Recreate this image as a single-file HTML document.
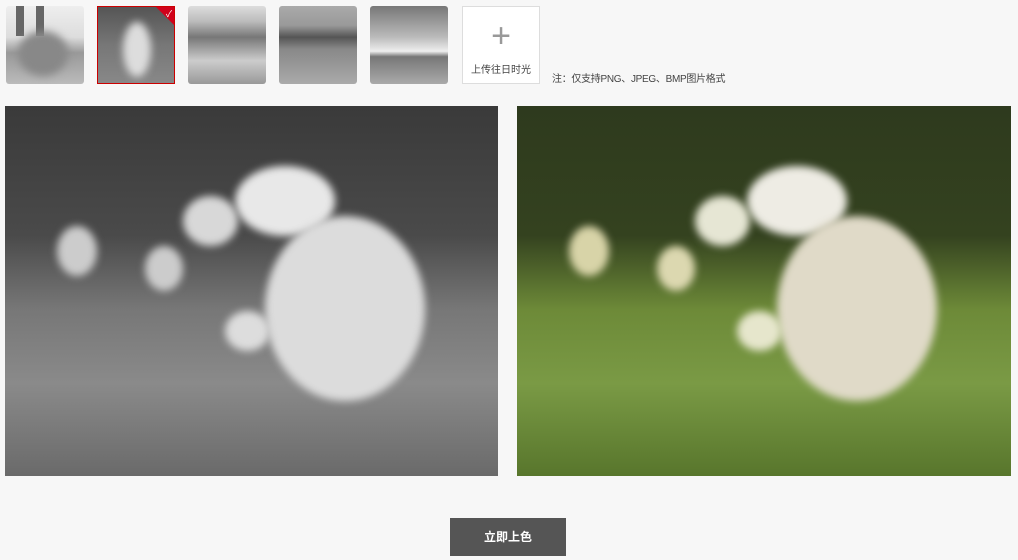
<!DOCTYPE html>
<html><head><meta charset="utf-8"><style>
body{margin:0;width:1018px;height:560px;background:#f7f7f7;position:relative;overflow:hidden;font-family:"Liberation Sans","Noto Sans CJK SC",sans-serif}
.t{position:absolute;top:6px;width:78px;height:78px;border-radius:3px;overflow:hidden}
.img{position:absolute;top:106px;height:370px;overflow:hidden}
.b{position:absolute;border-radius:50%;filter:blur(4px)}
</style></head><body>
<div class="t" style="left:6px;background:linear-gradient(180deg,#eee 0,#ddd 40%,#999 60%,#bbb 100%)">
<div style="position:absolute;left:10px;top:0;width:8px;height:30px;background:#666"></div>
<div style="position:absolute;left:30px;top:0;width:8px;height:30px;background:#666"></div>
<div class="b" style="left:12px;top:25px;width:50px;height:45px;background:#888"></div></div>
<div class="t" style="left:97px;width:76px;height:76px;border:1px solid #c00;border-radius:0;background:linear-gradient(180deg,#555,#777 50%,#888)">
<div class="b" style="left:25px;top:15px;width:28px;height:55px;background:#ddd"></div>
<div style="position:absolute;right:0;top:0;width:0;height:0;border-top:18px solid #d0021b;border-left:18px solid transparent"></div>
<div style="position:absolute;right:2px;top:0;color:#fff;font-size:9px">✓</div></div>
<div class="t" style="left:188px;background:linear-gradient(180deg,#ddd 0,#bbb 20%,#777 40%,#ccc 70%,#999)"></div>
<div class="t" style="left:279px;background:linear-gradient(180deg,#aaa 0,#999 25%,#555 40%,#888 55%,#aaa 100%)"></div>
<div class="t" style="left:370px;background:linear-gradient(180deg,#777 0,#bbb 40%,#eee 58%,#777 65%,#aaa 100%)"></div>
<div style="position:absolute;left:462px;top:6px;width:76px;height:76px;border:1px solid #ddd;background:#fff;text-align:center">
<div style="font-size:34px;color:#999;line-height:34px;margin-top:12px;font-weight:300">+</div>
<div style="font-size:10px;color:#444;margin-top:8px">上传往日时光</div></div>
<div style="position:absolute;left:552px;top:70px;font-size:10px;color:#444;letter-spacing:-0.3px">注：仅支持PNG、JPEG、BMP图片格式</div>
<div class="img" style="left:5px;width:493px;background:linear-gradient(180deg,#3a3a3a 0,#4a4a4a 35%,#777 55%,#8a8a8a 75%,#6a6a6a 100%)">
<div class="b" style="left:230px;top:60px;width:100px;height:70px;background:#e8e8e8"></div>
<div class="b" style="left:260px;top:110px;width:160px;height:185px;background:#dcdcdc"></div>
<div class="b" style="left:178px;top:90px;width:55px;height:50px;background:#d8d8d8"></div>
<div class="b" style="left:52px;top:120px;width:40px;height:50px;background:#ccc"></div>
<div class="b" style="left:140px;top:140px;width:38px;height:45px;background:#ccc"></div>
<div class="b" style="left:220px;top:205px;width:45px;height:40px;background:#ddd"></div></div>
<div class="img" style="left:517px;width:494px;background:linear-gradient(180deg,#2e3a1e 0,#34421f 35%,#6d8a38 55%,#7a9a45 75%,#58762c 100%)">
<div class="b" style="left:230px;top:60px;width:100px;height:70px;background:#eeece4"></div>
<div class="b" style="left:260px;top:110px;width:160px;height:185px;background:#e0dac8"></div>
<div class="b" style="left:178px;top:90px;width:55px;height:50px;background:#e6e6d4"></div>
<div class="b" style="left:52px;top:120px;width:40px;height:50px;background:#d8d4a8"></div>
<div class="b" style="left:140px;top:140px;width:38px;height:45px;background:#dcd8b0"></div>
<div class="b" style="left:220px;top:205px;width:45px;height:40px;background:#e6e6cc"></div></div>
<div style="position:absolute;left:450px;top:518px;width:116px;height:38px;background:#555;color:#fff;font-size:12px;font-weight:bold;text-align:center;line-height:38px">立即上色</div>
</body></html>
